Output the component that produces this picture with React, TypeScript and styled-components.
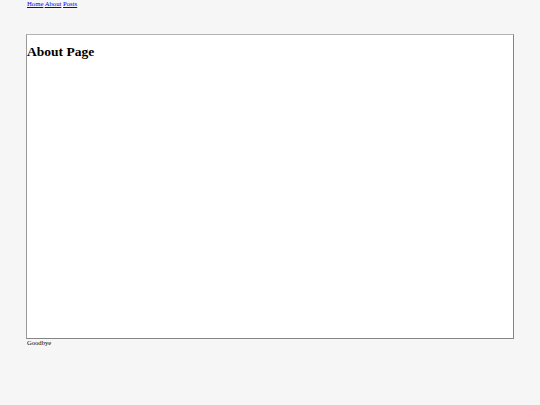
import styled, { createGlobalStyle } from "styled-components";

const GlobalStyle = createGlobalStyle`
	html, body {
		margin: 0;
		padding: 0;
		background: #f6f6f6;
		font-family: "Liberation Serif", "Times New Roman", serif;
	}
`;

export default function App() {
	return (
		<>
			<GlobalStyle />
			<Page>
				<Nav>
					<NavLink href="#">Home</NavLink> <NavLink href="#">About</NavLink>{" "}
					<NavLink href="#">Posts</NavLink>
				</Nav>
				<Frame>
					<Title>About Page</Title>
				</Frame>
				<Footer>Goodbye</Footer>
			</Page>
		</>
	);
}

const Page = styled.div`
	padding: 0 26px;
	display: flex;
	flex-direction: column;
`;

const Nav = styled.nav`
	font-size: 6.7px;
	line-height: 8px;
	padding-left: 1px;
`;

const NavLink = styled.a`
	color: #0000ee;
	text-decoration: underline;
`;

const Frame = styled.section`
	margin-top: 26px;
	height: 303px;
	background: #ffffff;
	border: 1px solid #858585;
	border-top-color: #b4b4b4;
	border-left-color: #9a9a9a;
`;

const Title = styled.h1`
	margin: 9px 0 0 0;
	font-size: 13.5px;
	line-height: 16px;
	font-weight: bold;
	color: #000;
`;

const Footer = styled.footer`
	font-size: 6.6px;
	line-height: 8px;
	padding-left: 1px;
	color: #000;
	font-weight: normal;
`;
